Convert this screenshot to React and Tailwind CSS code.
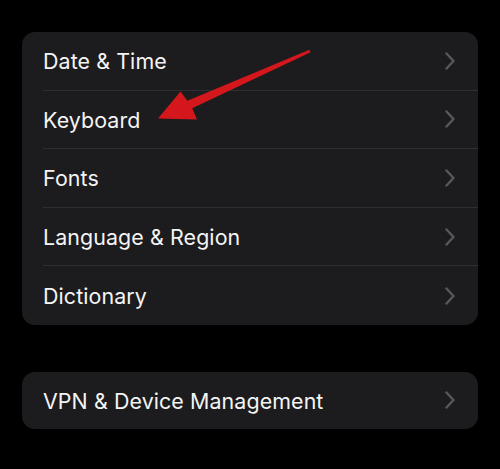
import React from "react";

const Chevron = () => (
  <svg width="12" height="18" viewBox="0 0 12 18" className="shrink-0">
    <polyline points="2.5,1.5 9.5,9 2.5,16.5" fill="none" stroke="#58585c" strokeWidth="2.4" strokeLinecap="round" strokeLinejoin="round" />
  </svg>
);

const Row = ({ label, last, h = "h-[58.6px]" }) => (
  <div className={`${h} pl-[21px] flex`}>
    <div className={`flex-1 flex items-center justify-between pr-[22px] ${last ? "" : "border-b border-[#2f2f31]"}`}>
      <span className="text-[#f4f4f5] text-[21.4px] tracking-[0.1px] pt-[1px]" style={{ fontFamily: "Inter, 'Liberation Sans', sans-serif" }}>{label}</span>
      <Chevron />
    </div>
  </div>
);

export default function App() {
  const items = ["Date & Time", "Keyboard", "Fonts", "Language & Region", "Dictionary"];
  return (
    <div className="relative w-[500px] h-[469px] bg-black overflow-hidden">
      <div className="pt-[32px] px-[22px]">
        <div className="bg-[#1c1c1e] rounded-[13px] overflow-hidden">
          {items.map((t, i) => (
            <Row key={t} label={t} last={i === items.length - 1} />
          ))}
        </div>
        <div className="mt-[47px] bg-[#1c1c1e] rounded-[13px] overflow-hidden">
          <Row label="VPN & Device Management" last h="h-[57px]" />
        </div>
      </div>
      <svg className="absolute left-0 top-0 pointer-events-none" width="500" height="469" viewBox="0 0 500 469">
        <polygon
          points="158,118.5 180.5,91.5 187.4,100.8 309.4,49.8 310.6,52.2 192.2,108.2 197,119.5"
          fill="#d4171c"
        />
      </svg>
    </div>
  );
}
